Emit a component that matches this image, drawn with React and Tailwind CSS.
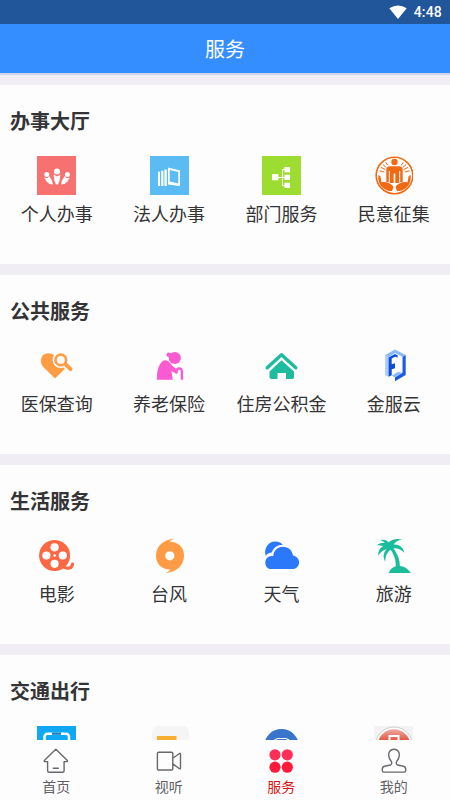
const svgProps = { width: 39, height: 39, viewBox: '0 0 39 39', className: 'block shrink-0' };

const PeopleIcon = () => (
  <svg {...svgProps}>
    <rect width="39" height="39" fill="#f87171" />
    <g fill="#fff">
      <circle cx="20" cy="15.4" r="3" />
      <circle cx="9.8" cy="18.5" r="2.5" />
      <circle cx="30.4" cy="18.5" r="2.5" />
      <path d="M16.6 18.6l3.4 1.8 3.4-1.8-.8 6-1.6 4h-2l-1.6-4z" />
      <path d="M7.2 21.6l3 .7 2.2-2.1 2.8 4.8.6 3.6-3.3-.5-3-2.6z" />
      <path d="M32.8 21.6l-3 .7-2.2-2.1-2.8 4.8-.6 3.6 3.3-.5 3-2.6z" />
    </g>
  </svg>
);

const BooksIcon = () => (
  <svg {...svgProps}>
    <rect width="39" height="39" fill="#5bbcf3" />
    <path fill="#fff" d="M8 15.8h2V30H8zM11.2 14.8h2.2V30h-2.2zM14.4 13.5h2.4V30h-2.4z" />
    <path fill="#fff" fillRule="evenodd" d="M18 11.5l12 3.1V30L18 28.5zM19.8 14l-.1 11.6 8.6 2V16z" />
  </svg>
);

const TreeIcon = () => (
  <svg {...svgProps}>
    <rect width="39" height="39" fill="#9ddd31" />
    <path stroke="#fff" fill="none" d="M15 21.5h8M20.5 13.5v16M20.5 13.5h3M20.5 29.5h3" />
    <path fill="#fff" d="M10 18h6.300v6.300H10zM22.500 11h5.500v5.200h-5.500zM22.500 18.800h5.500V24h-5.500zM22.500 26.800h5.500V32h-5.500z" />
  </svg>
);

const HandsIcon = () => (
  <svg {...svgProps}>
    <g fill="none" stroke="#f06a13">
      <circle cx="20.5" cy="19.5" r="18.3" strokeWidth="1.6" />
      <path strokeWidth="1" d="M5.5 14.8l4.8 1.2M7 11.4l4.4 2.2M9 8.6l3.4 3M11.8 6.4l2 3M35.5 14.8l-4.8 1.2M34 11.4l-4.4 2.2M32 8.6l-3.4 3M29.2 6.4l-2 3" />
    </g>
    <g fill="#f06a13">
      <circle cx="20.5" cy="6" r="3.2" />
      <path d="M16 10.200h9q3.700 0 3.700 3.600V26h-2.500V15h-1v12h-3.900V17.500h-1.600V27h-3.900V15h-1v11h-2.500V13.800q0-3.600 3.700-3.600z" />
      <path d="M4.300 19l2 1 1.200 6.200q5-.4 8.200 1.300 3.800 2 3.600 4.200l-1.300 3.400q-5.500-.2-9.600-3.700Q3.600 27 4.300 19z" />
      <path d="M36.700 19l-2 1-1.200 6.200q-5-.4-8.200 1.300-3.800 2-3.600 4.200l1.300 3.400q5.500-.2 9.600-3.700Q37.400 27 36.700 19z" />
    </g>
  </svg>
);

const HeartSearchIcon = () => (
  <svg {...svgProps}>
    <path fill="#ff9d45" d="M17.300 9.500C14 6.500 8.800 6.400 5.800 9.600 3 12.800 3.300 17.800 6.300 21L18 32.500l9.800-9.500z" />
    <g stroke="#fdfdfd" strokeWidth="5.800" fill="#fdfdfd" strokeLinecap="round">
      <circle cx="23.800" cy="13.900" r="5.300" />
      <path d="M28 17.500l5.200 5" strokeWidth="6.500" />
    </g>
    <g stroke="#ff9d45" fill="none" strokeLinecap="round">
      <circle cx="23.800" cy="13.900" r="5.300" strokeWidth="2.700" />
      <path d="M29 18.700l4.500 4.400" strokeWidth="4" />
    </g>
  </svg>
);

const ElderIcon = () => (
  <svg {...svgProps}>
    <g fill="#fa5bd2">
      <circle cx="24.800" cy="12" r="6.100" />
      <circle cx="18.800" cy="8.700" r="2.300" />
      <path d="M7 33.800V30C7.300 23 10 15 15 14.300c4.200-.2 5.600 4.300 9 7l3.600 2.500-.2 4-3.200-1.400-2.800-1.200 1.400 8.600z" />
    </g>
    <path fill="none" stroke="#fa5bd2" strokeWidth="2.400" d="M26.500 27.500q-.8-4.500 2.200-5 3.100-.5 3.200 3.600v7.700" />
  </svg>
);

const HouseIcon = () => (
  <svg {...svgProps}>
    <path d="M5.200 21.800L19.500 8.700l14.300 13.100" fill="none" stroke="#1dbc9f" strokeWidth="3.400" strokeLinecap="round" strokeLinejoin="round" />
    <path fill="#1dbc9f" d="M19.500 14.200L32 25.500v5.700q0 1.800-1.800 1.800H24v-6h-8.500v6H9.300q-1.800 0-1.800-1.800v-5.700z" />
  </svg>
);

const CloudServiceIcon = () => (
  <svg {...svgProps}>
    <path fill="#8cb9f8" d="M11.200 8.900L21 3.600l10.700 5.300-3 2.200L21 7l-6.500 4.500z" />
    <path fill="#a9cbfa" d="M11.200 8.900l3.500 2.400v19.500l-3.500-1.600z" />
    <path fill="#1a5ce4" d="M28.500 11.100l3.200-2.200V29L21 35.200v-4l7.500-4.400z" />
    <path fill="#0b4cd8" d="M14.600 11.600L21 8l2.700 1.400v2.100L21 10.700l-3.300 1.900v5.700l3.300-1v5l-3.300 1v5.900l-3.100 1.500z" />
    <path fill="#8cb9f8" d="M17.600 29.700l6.700-4 4.200 1.200-7.500 4.400z" />
  </svg>
);

const FilmIcon = () => (
  <svg {...svgProps}>
    <circle cx="17.600" cy="19.500" r="15.500" fill="#fc6844" />
    <path d="M26 30.500c4.500 3.100 9 2 9.600-2.500" fill="none" stroke="#fc6844" strokeWidth="3.100" strokeLinecap="round" />
    <g fill="#fff">
      <circle cx="17.600" cy="11.300" r="4.100" />
      <circle cx="17.600" cy="27.800" r="4.100" />
      <circle cx="9.400" cy="19.500" r="4.100" />
      <circle cx="25.800" cy="19.500" r="4.100" />
      <circle cx="17.600" cy="19.500" r="1.300" />
    </g>
  </svg>
);

const TyphoonIcon = () => (
  <svg {...svgProps}>
    <path fill="#fe9b44" fillRule="evenodd" d="M24.500 3C15 3 6 9 6 20c0 8 6 13.700 14.500 13.500-1 1.300-2.500 2-4.500 3.400C27 36 34 29 34 19.500 34 11 28 5.600 19.500 5.700c1.300-1.400 3-2 5-2.700zM19.800 15.200a4.600 4.600 0 100 9.200 4.600 4.600 0 000-9.200z" />
  </svg>
);

const WeatherIcon = () => (
  <svg {...svgProps}>
    <path fill="#2b79fa" d="M3.700 19.800C1.500 12.500 6.300 5.400 12.800 5.400c4.200 0 7 1.700 8.100 3.400-5.700 0-9.500 3-11 7.600-2.800.2-4.900 1.400-6.200 3.400z" />
    <path fill="#2b79fa" d="M9 33c-3.500 0-5.700-2.800-5.700-6.300 0-4.500 3.400-7.500 8-6.600 0-5.200 4.300-9.400 9.600-9.400 5.700 0 9.700 4 10 8.800 3.700.7 6.200 3.500 6.200 6.700 0 3.900-2.800 6.800-6.600 6.800z" />
  </svg>
);

const PalmIcon = () => (
  <svg {...svgProps}>
    <path fill="#1abc9c" d="M14 7.300C17 3.500 22.500 2.300 28 3.600c-3.800.8-6.600 2.500-8.500 5 5.400-.6 9.600 2.400 11 8.200-3-3.300-6.600-4.900-11-4.600 4 6 6.800 11.300 6.300 19.800h-4c.4-7.500-1.500-13-5.200-18.300-4 2.800-5.300 6.800-5.300 12-2.600-4.600-2-9 1.300-12.500-3.500.7-6 2.800-8.400 6.500-.2-4.500 1.700-8 5.200-9.800L3 9.100c3.300-2.500 7.300-3 11-1.800z" />
    <path fill="#1abc9c" d="M14.500 37c2.500-5.700 6.300-7.100 11.100-7.100 4.800 0 8.300 2.900 11.200 7.100z" />
    <path fill="#1abc9c" d="M6.500 4q6-1.500 9 3.500l-3 1.500q-2-3.500-6-5z" />
  </svg>
);

const PhoneIcon = () => (
  <svg {...svgProps}>
    <rect width="39" height="39" fill="#10a8f5" />
    <rect x="7.500" y="7.700" width="24.500" height="31" rx="3" fill="none" stroke="#fff" strokeWidth="2.500" />
    <path d="M15 6.500h9v2.300h-9z" fill="#1482c3" />
  </svg>
);

const CardIcon = () => (
  <svg {...svgProps}>
    <rect x="2" width="37" height="39" rx="6" fill="#f6f5f6" />
    <path d="M4 10h19.500v29H4z" fill="#f9ae2d" transform="translate(3 0)" />
  </svg>
);

const BusIcon = () => (
  <svg {...svgProps}>
    <circle cx="19.500" cy="20.500" r="17.500" fill="#3976cb" />
    <path d="M12.500 14l3-1.500h8.500l3 1.500" fill="none" stroke="#fff" strokeWidth="1.100" />
  </svg>
);

const TrafficIcon = () => (
  <svg {...svgProps}>
    <defs>
      <linearGradient id="redGlow" x1="0" y1="0" x2="0" y2="1">
        <stop offset="0" stopColor="#efaaa0" />
        <stop offset=".35" stopColor="#e25541" />
      </linearGradient>
    </defs>
    <rect width="39" height="39" fill="#f4f3f3" />
    <circle cx="20" cy="19.500" r="18.500" fill="#fff" stroke="#d2cccc" />
    <circle cx="20" cy="19.500" r="16.300" fill="url(#redGlow)" />
    <path d="M15.500 20V10h9v10" fill="none" stroke="#fff" strokeWidth="2" />
  </svg>
);

const sections = [
  { title: '办事大厅', items: [['个人办事', PeopleIcon], ['法人办事', BooksIcon], ['部门服务', TreeIcon], ['民意征集', HandsIcon]] },
  { title: '公共服务', items: [['医保查询', HeartSearchIcon], ['养老保险', ElderIcon], ['住房公积金', HouseIcon], ['金服云', CloudServiceIcon]] },
  { title: '生活服务', items: [['电影', FilmIcon], ['台风', TyphoonIcon], ['天气', WeatherIcon], ['旅游', PalmIcon]] },
  { title: '交通出行', items: [['', PhoneIcon], ['', CardIcon], ['', BusIcon], ['', TrafficIcon]] },
];

const tabSvg = { width: 26, height: 26, viewBox: '0 0 26 26', fill: 'none', stroke: '#6a676d', strokeWidth: 1.4, strokeLinejoin: 'round', strokeLinecap: 'round', className: 'block' };

const HomeTab = () => (
  <svg {...tabSvg}>
    <path d="M12.800 1.200L1.300 12.500q-.3 1 .7 1.100h2.600v9.200q0 1.500 1.500 1.500h13.500q1.500 0 1.500-1.500v-9.200h2.600q1-.1.700-1.100zM10.300 20.300h5" />
  </svg>
);

const VideoTab = () => (
  <svg {...tabSvg}>
    <path d="M2.700 4.200h12.800q1.300 0 1.300 1.300v15.200q0 1.300-1.300 1.300H2.700q-1.300 0-1.300-1.300V5.500q0-1.300 1.300-1.300zM16.800 10.300l6.700-4.800q1-.5 1 .6v14q0 1.100-1 .6l-6.700-4.800" />
  </svg>
);

const ServiceTab = () => (
  <svg {...tabSvg} stroke="none">
    <g fill="#ff2f58">
      <circle cx="7" cy="6.800" r="5.600" />
      <circle cx="19.300" cy="6.800" r="5.600" />
    </g>
    <g fill="#ff193b">
      <circle cx="7" cy="19.200" r="5.600" />
      <circle cx="19.300" cy="19.200" r="5.600" />
    </g>
  </svg>
);

const ProfileTab = () => (
  <svg {...tabSvg}>
    <path d="M13 1.200c-3.700 0-5.500 2.700-5.300 6.300.1 2.500 1.200 4.200 2.500 5.800.9 1.300.6 3-.9 3.700l-5.800 1.200c-1.500.4-2.200 1.400-2.200 3v1.300q0 1.600 1.600 1.600h20.200q1.600 0 1.600-1.600v-1.300c0-1.600-.7-2.600-2.200-3L16.700 17c-1.500-.7-1.800-2.400-.9-3.700 1.300-1.600 2.400-3.300 2.500-5.800.2-3.600-1.600-6.300-5.300-6.300z" />
  </svg>
);

const tabs = [['首页', HomeTab], ['视听', VideoTab], ['服务', ServiceTab], ['我的', ProfileTab]];

export default function App() {
  return (
    <div className="flex h-[800px] w-[450px] flex-col overflow-hidden bg-[#f0eef4] font-['Noto_Sans_CJK_SC',sans-serif] text-[#343436]">
      <div className="flex h-6 shrink-0 items-center justify-end bg-[#21569b] pr-[8px] text-white">
        <svg width="18" height="14" viewBox="0 0 18 14" className="mr-[7px]">
          <path d="M.3 3.300Q9-2.500 17.700 3.300L9 14z" fill="#fff" />
        </svg>
        <span className="font-[Roboto,sans-serif] text-[14px] leading-6 font-medium tracking-[0.2px]">4:48</span>
      </div>
      <header className="flex h-[49px] shrink-0 items-center justify-center bg-[#348eff] text-[20px] text-white">服务</header>
      <div className="h-[2px] shrink-0 bg-[#cfd5ea]" />
      <main className="flex min-h-0 flex-1 flex-col gap-[11px] overflow-hidden pt-[10px]">
        {sections.map(({ title, items }) => (
          <section key={title} className="h-[179px] shrink-0 bg-[#fdfdfd] pt-[21px]">
            <h2 className="pl-[10px] text-[20px] leading-[30px] font-bold">{title}</h2>
            <div className="mt-5 grid grid-cols-4 pl-[0.5px]">
              {items.map(([label, Icon], index) => (
                <div key={index} className="flex flex-col items-center">
                  <Icon />
                  {label && <span className="mt-[5px] text-[18px] leading-[26px] whitespace-nowrap">{label}</span>}
                </div>
              ))}
            </div>
          </section>
        ))}
      </main>
      <nav className="grid h-[60px] shrink-0 grid-cols-4 bg-[#fdfdfd] pt-2">
        {tabs.map(([label, Icon]) => (
          <div key={label} className="flex flex-col items-center">
            <Icon />
            <span className={label === '服务' ? 'mt-[2px] text-[14px] leading-5 text-[#d81717]' : 'mt-[2px] text-[14px] leading-5 text-[#626066]'}>{label}</span>
          </div>
        ))}
      </nav>
    </div>
  );
}
